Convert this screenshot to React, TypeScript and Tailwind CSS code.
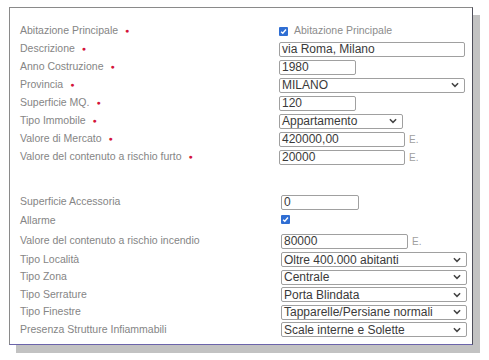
import React from 'react'

type Row = {
  label: string
  required?: boolean
  kind: 'check' | 'checkLabel' | 'text' | 'select' | 'none'
  value?: string
  width: string
  euro?: boolean
  h: string
}

const top: Row[] = [
  { label: 'Abitazione Principale', required: true, kind: 'checkLabel', value: 'Abitazione Principale', width: '', h: 'h-[18px]' },
  { label: 'Descrizione', required: true, kind: 'text', value: 'via Roma, Milano', width: 'w-[186px]', h: 'h-[18px]' },
  { label: 'Anno Costruzione', required: true, kind: 'text', value: '1980', width: 'w-[77px]', h: 'h-[18px]' },
  { label: 'Provincia', required: true, kind: 'select', value: 'MILANO', width: 'w-[186px]', h: 'h-[18px]' },
  { label: 'Superficie MQ.', required: true, kind: 'text', value: '120', width: 'w-[77px]', h: 'h-[18px]' },
  { label: 'Tipo Immobile', required: true, kind: 'select', value: 'Appartamento', width: 'w-[124px]', h: 'h-[18px]' },
  { label: 'Valore di Mercato', required: true, kind: 'text', value: '420000,00', width: 'w-[126px]', euro: true, h: 'h-[18px]' },
  { label: 'Valore del contenuto a rischio furto', required: true, kind: 'text', value: '20000', width: 'w-[126px]', euro: true, h: 'h-[18px]' },
]

const bottom: Row[] = [
  { label: 'Superficie Accessoria', kind: 'text', value: '0', width: 'w-[78px]', h: 'h-[18px]' },
  { label: 'Allarme', kind: 'check', width: '', h: 'h-[20px]' },
  { label: 'Valore del contenuto a rischio incendio', kind: 'text', value: '80000', width: 'w-[127px]', euro: true, h: 'h-[20px]' },
  { label: 'Tipo Località', kind: 'select', value: 'Oltre 400.000 abitanti', width: 'w-[186px]', h: 'h-[17px]' },
  { label: 'Tipo Zona', kind: 'select', value: 'Centrale', width: 'w-[186px]', h: 'h-[18px]' },
  { label: 'Tipo Serrature', kind: 'select', value: 'Porta Blindata', width: 'w-[186px]', h: 'h-[17px]' },
  { label: 'Tipo Finestre', kind: 'select', value: 'Tapparelle/Persiane normali', width: 'w-[186px]', h: 'h-[18px]' },
  { label: 'Presenza Strutture Infiammabili', kind: 'select', value: 'Scale interne e Solette', width: 'w-[186px]', h: 'h-[17px]' },
]

function Check() {
  return (
    <span className="inline-flex w-[9px] h-[9px] items-center justify-center rounded-[1px] bg-[#2f6ed3]">
      <svg width="7" height="7" viewBox="0 0 8 8">
        <path d="M1.3 4.2 L3.2 6 L6.8 1.8" fill="none" stroke="#fff" strokeWidth="1.6" />
      </svg>
    </span>
  )
}

function Field({ row }: { row: Row }) {
  if (row.kind === 'checkLabel')
    return (
      <div className="flex items-center gap-[6px]">
        <Check />
        <span className="text-[10.5px] text-[#8c8c8c]">{row.value}</span>
      </div>
    )
  if (row.kind === 'check') return <div className="flex items-center pb-[4px]"><Check /></div>
  return (
    <div className="flex items-center">
      <div
        className={`${row.width} h-[15px] flex items-center justify-between border border-[#a0a0a0] rounded-[2px] bg-white px-[2px] text-[12px] leading-none text-[#3a3a3a]`}
      >
        <span>{row.value}</span>
        {row.kind === 'select' && (
          <svg width="8" height="6" viewBox="0 0 9 6" className="mr-[3px]">
            <path d="M1 1 L4.5 4.5 L8 1" fill="none" stroke="#444" strokeWidth="1.7" />
          </svg>
        )}
      </div>
      {row.euro && <span className="ml-[4px] text-[10px] text-[#a0a0a0]">E.</span>}
    </div>
  )
}

function Rows({ rows, offset }: { rows: Row[]; offset: string }) {
  return (
    <div className="flex flex-col">
      {rows.map(r => (
        <div key={r.label} className={`flex items-center ${r.h}`}>
          <div className="w-[259px] flex items-center text-[10.5px] text-[#858585]">
            {r.label}
            {r.required && <span className="ml-[7px] text-[7px] text-[#d4143a]">●</span>}
          </div>
          <div className={offset}>
            <Field row={r} />
          </div>
        </div>
      ))}
    </div>
  )
}

export default function App() {
  return (
    <div className="w-[489px] h-[360px] bg-white pt-[7px] pl-[9px]" style={{ fontFamily: '"Liberation Sans", Arial, sans-serif' }}>
      <div className="w-[464px] h-[338px] border border-[#8a8a8a] border-r-[#4e4e5a] border-b-[#6b64aa] bg-white pt-[14px] pl-[10px] shadow-[7px_8px_0_#c2c2c2]">
        <Rows rows={top} offset="" />
        <div className="h-[27px]" />
        <Rows rows={bottom} offset="ml-[2px]" />
      </div>
    </div>
  )
}
